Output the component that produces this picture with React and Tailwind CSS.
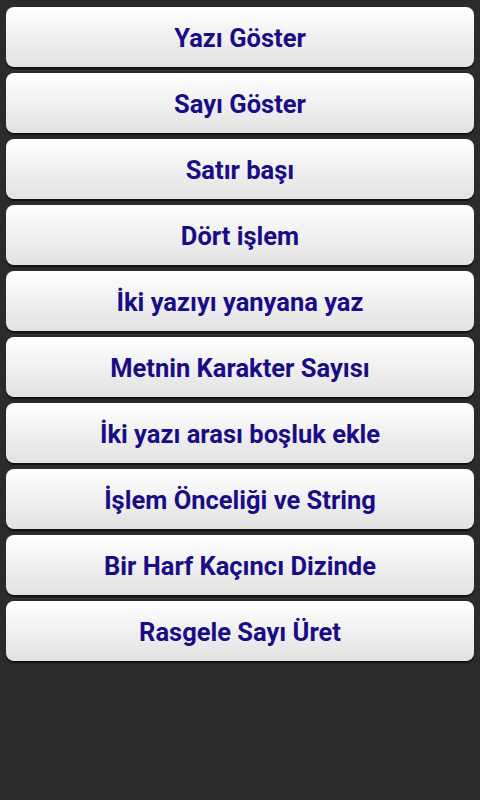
const items = [
  'Yazı Göster',
  'Sayı Göster',
  'Satır başı',
  'Dört işlem',
  'İki yazıyı yanyana yaz',
  'Metnin Karakter Sayısı',
  'İki yazı arası boşluk ekle',
  'İşlem Önceliği ve String',
  'Bir Harf Kaçıncı Dizinde',
  'Rasgele Sayı Üret',
];

export default function App() {
  return (
    <div className="min-h-[800px] w-[480px] bg-[#2b2b2b] px-[6px] pt-[7px] flex flex-col gap-[6px]">
      {items.map((label) => (
        <button
          key={label}
          className="h-[60px] w-full rounded-[8px] bg-gradient-to-b from-[#ffffff] to-[#e2e2e2] shadow-[0_2px_1px_rgba(0,0,0,0.6)] pt-[2px] text-[25.5px] font-bold text-[#1a0c86] font-['Roboto',sans-serif] flex items-center justify-center"
        >
          {label}
        </button>
      ))}
    </div>
  );
}
